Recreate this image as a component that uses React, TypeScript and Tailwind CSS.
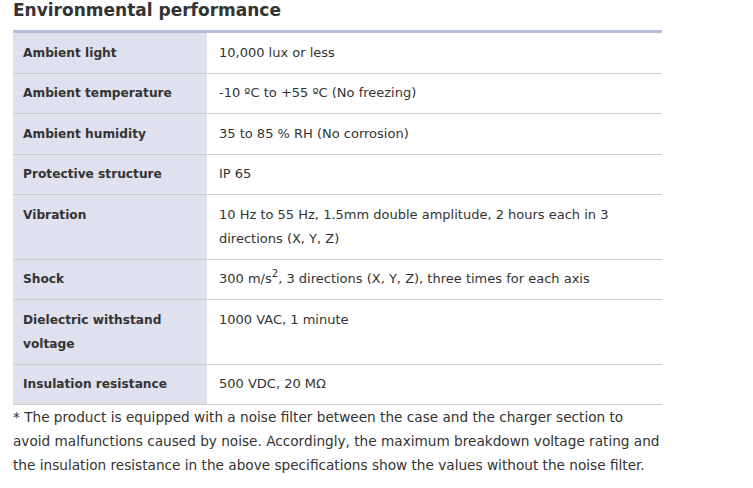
const rows: { label: React.ReactNode; value: React.ReactNode }[] = [
  { label: "Ambient light", value: "10,000 lux or less" },
  { label: "Ambient temperature", value: "-10 ºC to +55 ºC (No freezing)" },
  { label: "Ambient humidity", value: "35 to 85 % RH (No corrosion)" },
  { label: "Protective structure", value: "IP 65" },
  {
    label: "Vibration",
    value: "10 Hz to 55 Hz, 1.5mm double amplitude, 2 hours each in 3 directions (X, Y, Z)",
  },
  {
    label: "Shock",
    value: (
      <>
        300 m/s<span className="relative -top-[6px] text-[10px] leading-none">2</span>, 3 directions (X, Y, Z), three times for each axis
      </>
    ),
  },
  { label: "Dielectric withstand voltage", value: "1000 VAC, 1 minute" },
  { label: "Insulation resistance", value: "500 VDC, 20 MΩ" },
];

export default function App() {
  return (
    <div className="w-[753px] h-[488px] bg-white overflow-hidden pl-[13px] text-[#333] font-['DejaVu_Sans',sans-serif]">
      <h2 className="text-[17px] font-bold leading-[20px] pt-0 mb-[10px] text-[#333]">Environmental performance</h2>
      <table className="w-[649px] border-collapse border-t-[3px] border-[#b7bcdb] text-[13px] leading-[24px]">
        <tbody>
          {rows.map((row, i) => (
            <tr key={i} className="border-b border-[#cccccc]">
              <th className="w-[194px] bg-[#dfe1ee] text-left align-top font-bold text-[12.2px] pl-[10px] pr-2 py-[7.75px]">
                {row.label}
              </th>
              <td className="align-top pl-[12px] pr-2 py-[7.75px]">{row.value}</td>
            </tr>
          ))}
        </tbody>
      </table>
      <p className="w-[649px] text-[13.65px] leading-[24px] mt-0">
        * The product is equipped with a noise filter between the case and the charger section to avoid malfunctions caused by noise. Accordingly, the maximum breakdown voltage rating and the insulation resistance in the above specifications show the values without the noise filter.
      </p>
    </div>
  );
}
